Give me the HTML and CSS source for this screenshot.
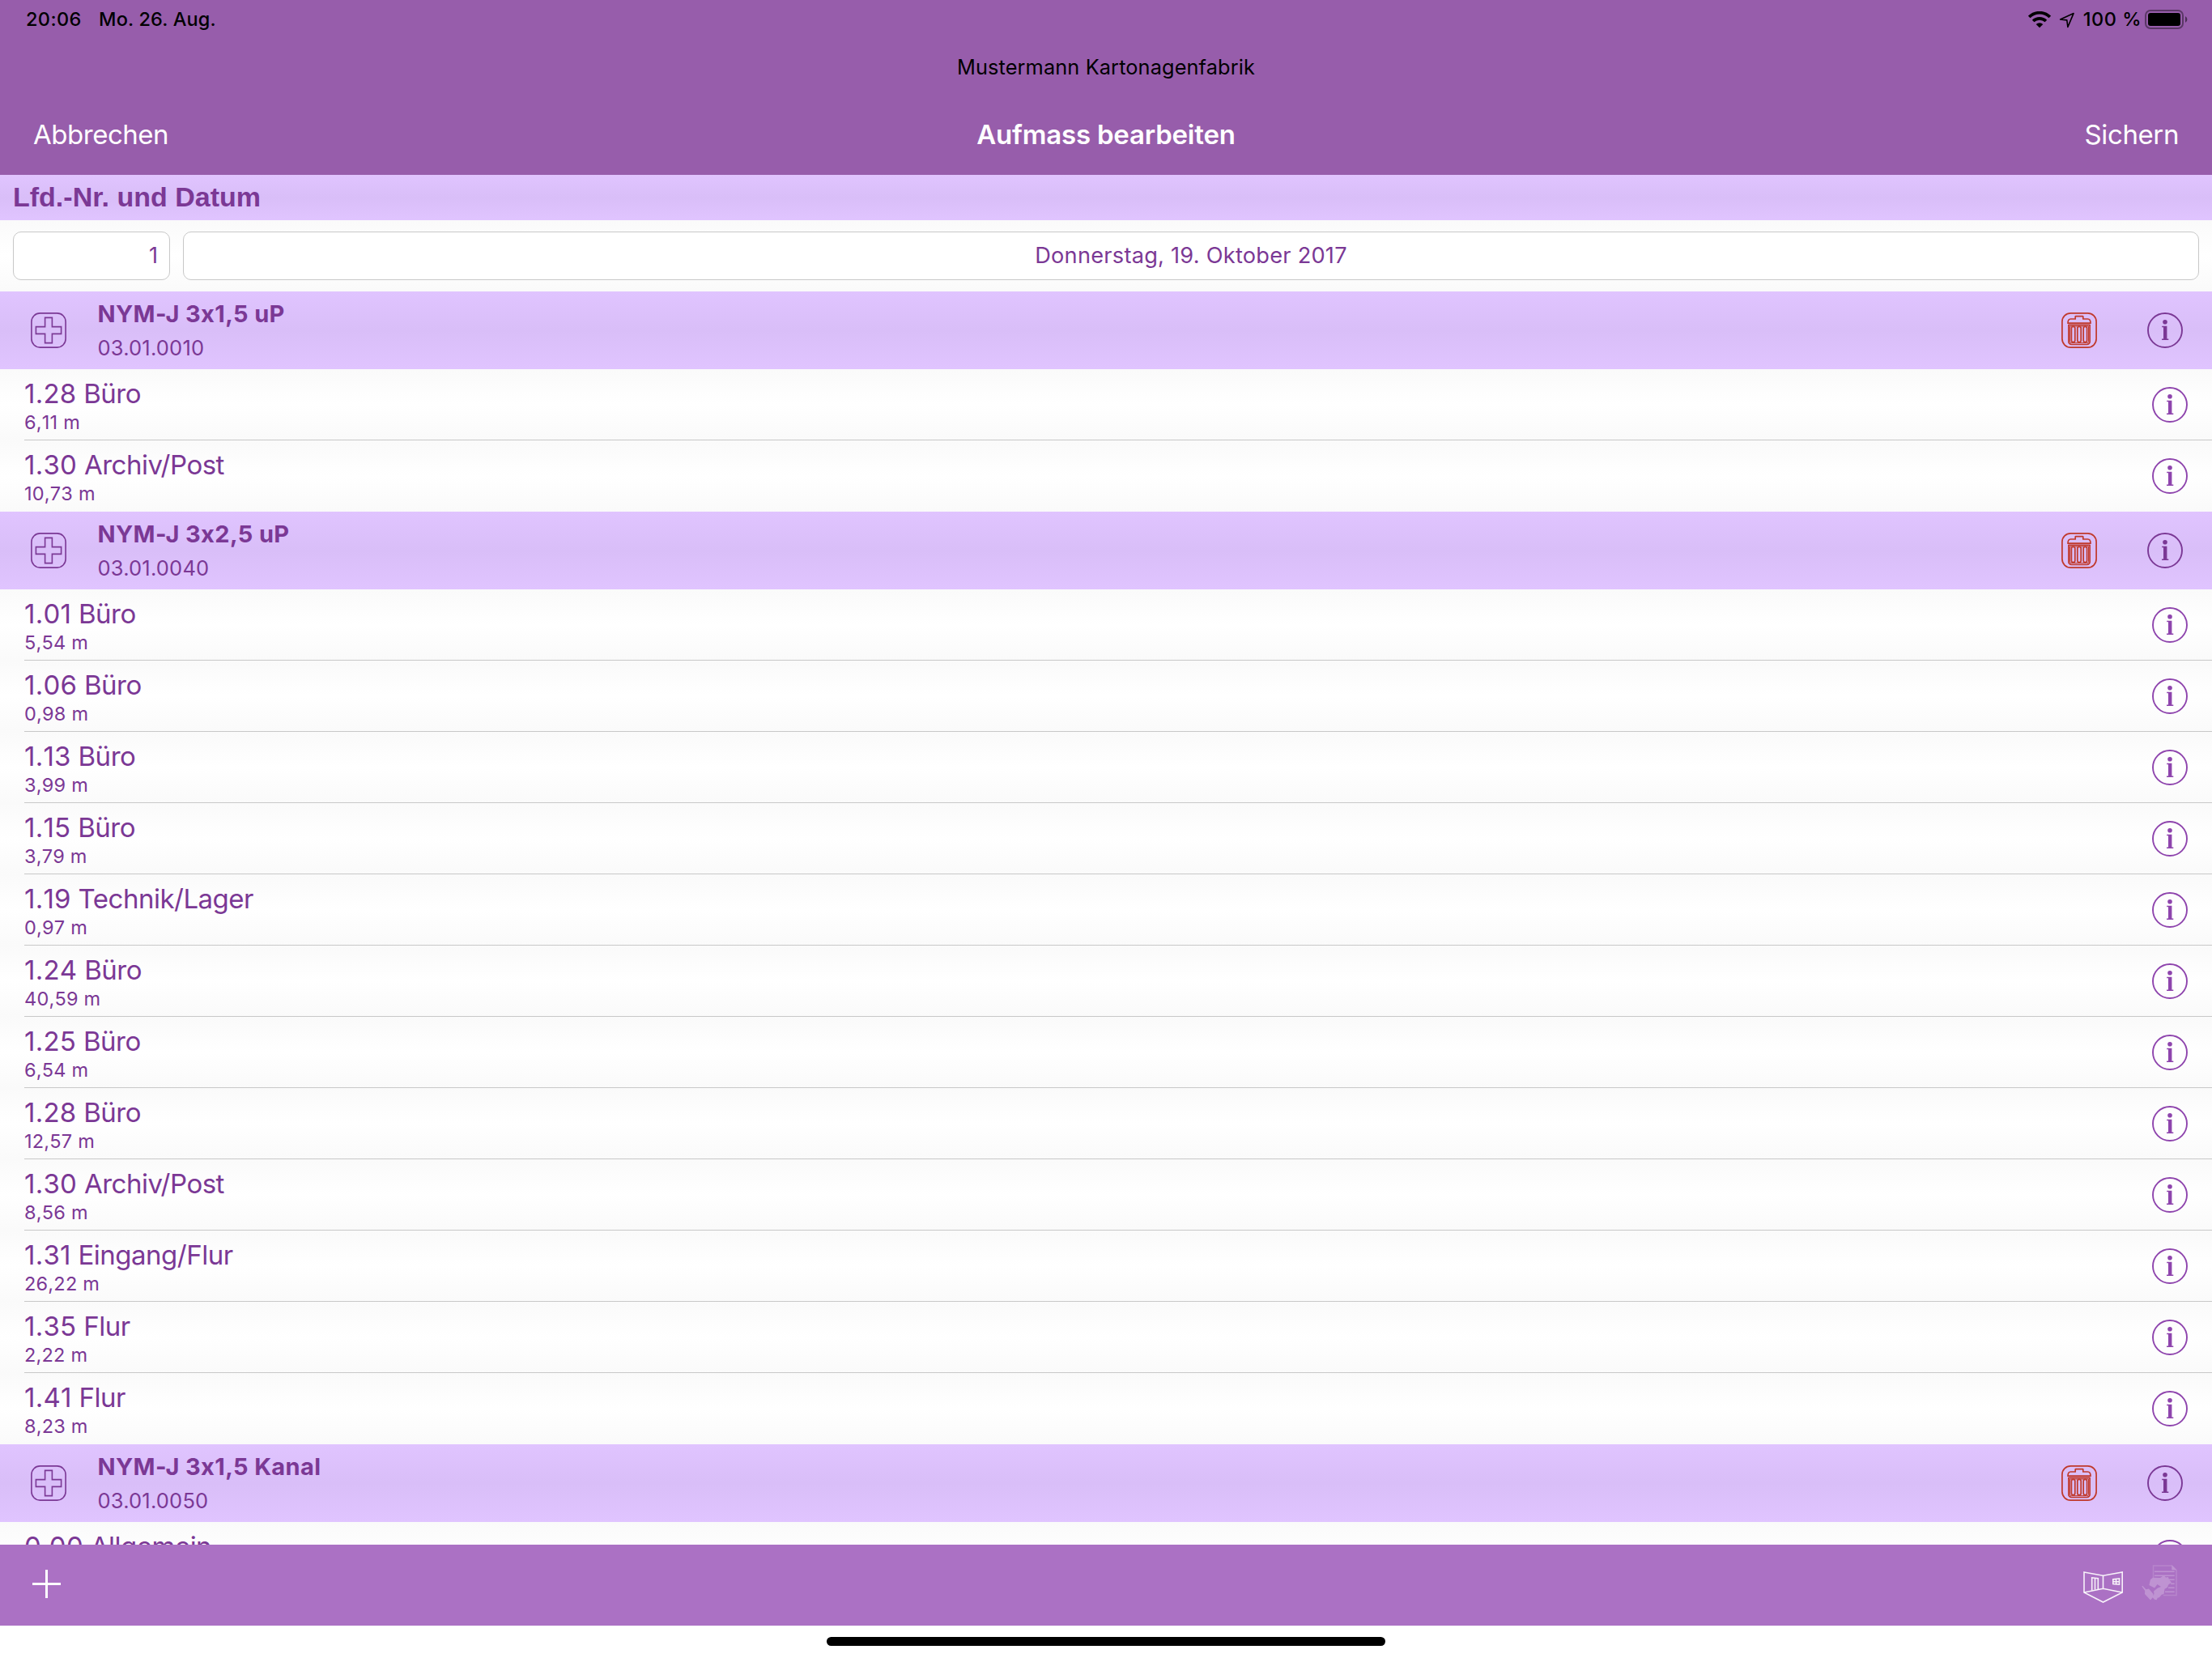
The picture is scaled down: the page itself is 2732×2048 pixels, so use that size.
FILE: index.html
```
<!DOCTYPE html>
<html lang="de">
<head>
<meta charset="utf-8">
<title>Aufmass bearbeiten</title>
<link rel="stylesheet" href="styles.css">
</head>
<body>
<svg class="defs" aria-hidden="true">
  <symbol id="info" viewBox="0 0 44 44">
    <circle cx="22" cy="22" r="21" fill="none" stroke="currentColor" stroke-width="1.9"/>
    <circle cx="22" cy="11.8" r="2.8" fill="currentColor"/>
    <path d="M18.2 16.7h6.2v15.9h1.9v1.3h-8.3v-1.3h2v-14.4h-1.8z" fill="currentColor"/>
  </symbol>
  <symbol id="plusbox" viewBox="0 0 44 44">
    <g fill="none" stroke="currentColor" stroke-width="1.6">
      <rect x=".9" y=".9" width="42.2" height="42.2" rx="10.5"/>
      <path d="M17.6 6.4h8.8v11.2h11.2v8.8H26.4v11.2h-8.8V26.4H6.4v-8.8h11.2z"/>
    </g>
  </symbol>
  <symbol id="trash" viewBox="0 0 44 44">
    <g fill="none" stroke="currentColor" stroke-width="1.7" stroke-linejoin="round">
      <rect x=".9" y=".9" width="42.2" height="42.2" rx="10.5"/>
      <path d="M8 13.2h28c0-2.7-1.2-5.2-3.400-5.200h-5.800V5.200c0-.4-.3-.6-.7-.6h-8.200c-.4 0-.7.200-.7.600V8h-5.800C9.200 8 8 10.500 8 13.200z"/>
      <path d="M8.900 15.300h26.200v20.700a3.500 3.500 0 0 1-3.500 3.500H12.400a3.500 3.500 0 0 1-3.500-3.500z"/>
      <path d="M10.500 17v18.800a1.800 1.800 0 0 0 1.800 1.800h19.400a1.800 1.800 0 0 0 1.800-1.800V17z" stroke-width="1"/>
      <rect x="12.400" y="17.300" width="4.400" height="19.300" rx="2.200"/>
      <rect x="19.800" y="17.300" width="4.400" height="19.300" rx="2.200"/>
      <rect x="27.200" y="17.300" width="4.400" height="19.300" rx="2.200"/>
    </g>
  </symbol>
</svg>

<header class="header">
  <div class="status">
    <span class="time">20:06</span>
    <span class="date">Mo. 26. Aug.</span>
    <span class="indicators">
      <svg class="wifi" width="28" height="21" viewBox="0 0 28 21">
        <g fill="none" stroke="#000" stroke-width="3.700">
          <path d="M1.200 6.900a18.300 18.300 0 0 1 25.600 0"/>
          <path d="M6.100 12a11.400 11.400 0 0 1 15.800 0"/>
        </g>
        <path d="M14 20.300l-4.300-4.200a6.200 6.200 0 0 1 8.600 0z"/>
      </svg>
      <svg class="arrow" width="20" height="20" viewBox="0 0 20 20">
        <path d="M18 1.600L1.600 9l8.200.9 1.100 8.500z" fill="none" stroke="#000" stroke-width="1.600" stroke-linejoin="round"/>
      </svg>
      <span class="percent">100 %</span>
      <svg class="battery" width="54" height="24" viewBox="0 0 54 24">
        <rect x="1" y="1" width="46" height="22" rx="6" fill="none" stroke="#000" stroke-opacity=".4" stroke-width="2"/>
        <rect x="4" y="4" width="40" height="16" rx="3"/>
        <path d="M50 8a4.500 4.500 0 0 1 0 8z" fill-opacity=".5"/>
      </svg>
    </span>
  </div>
  <div class="company">Mustermann Kartonagenfabrik</div>
  <nav class="nav">
    <span class="nav-cancel">Abbrechen</span>
    <span class="nav-title">Aufmass bearbeiten</span>
    <span class="nav-save">Sichern</span>
  </nav>
</header>

<main class="content">
  <h2 class="band">Lfd.-Nr. und Datum</h2>
  <div class="fields">
    <div class="field field-number">1</div>
    <div class="field field-date">Donnerstag, 19. Oktober 2017</div>
  </div>

  <section>
    <div class="position">
      <svg class="icon"><use href="#plusbox"/></svg>
      <div class="position-text"><div class="position-name">NYM-J 3x1,5 uP</div><div class="position-number">03.01.0010</div></div>
      <svg class="icon icon-trash"><use href="#trash"/></svg>
      <svg class="icon"><use href="#info"/></svg>
    </div>
    <div class="row"><div class="row-text"><div class="room"><span class="room-no">1.28</span> Büro</div><div class="amount">6,11 m</div></div><svg class="icon"><use href="#info"/></svg></div>
    <div class="row"><div class="row-text"><div class="room"><span class="room-no">1.30</span> Archiv/Post</div><div class="amount">10,73 m</div></div><svg class="icon"><use href="#info"/></svg></div>
  </section>

  <section>
    <div class="position">
      <svg class="icon"><use href="#plusbox"/></svg>
      <div class="position-text"><div class="position-name">NYM-J 3x2,5 uP</div><div class="position-number">03.01.0040</div></div>
      <svg class="icon icon-trash"><use href="#trash"/></svg>
      <svg class="icon"><use href="#info"/></svg>
    </div>
    <div class="row"><div class="row-text"><div class="room"><span class="room-no">1.01</span> Büro</div><div class="amount">5,54 m</div></div><svg class="icon"><use href="#info"/></svg></div>
    <div class="row"><div class="row-text"><div class="room"><span class="room-no">1.06</span> Büro</div><div class="amount">0,98 m</div></div><svg class="icon"><use href="#info"/></svg></div>
    <div class="row"><div class="row-text"><div class="room"><span class="room-no">1.13</span> Büro</div><div class="amount">3,99 m</div></div><svg class="icon"><use href="#info"/></svg></div>
    <div class="row"><div class="row-text"><div class="room"><span class="room-no">1.15</span> Büro</div><div class="amount">3,79 m</div></div><svg class="icon"><use href="#info"/></svg></div>
    <div class="row"><div class="row-text"><div class="room"><span class="room-no">1.19</span> Technik/Lager</div><div class="amount">0,97 m</div></div><svg class="icon"><use href="#info"/></svg></div>
    <div class="row"><div class="row-text"><div class="room"><span class="room-no">1.24</span> Büro</div><div class="amount">40,59 m</div></div><svg class="icon"><use href="#info"/></svg></div>
    <div class="row"><div class="row-text"><div class="room"><span class="room-no">1.25</span> Büro</div><div class="amount">6,54 m</div></div><svg class="icon"><use href="#info"/></svg></div>
    <div class="row"><div class="row-text"><div class="room"><span class="room-no">1.28</span> Büro</div><div class="amount">12,57 m</div></div><svg class="icon"><use href="#info"/></svg></div>
    <div class="row"><div class="row-text"><div class="room"><span class="room-no">1.30</span> Archiv/Post</div><div class="amount">8,56 m</div></div><svg class="icon"><use href="#info"/></svg></div>
    <div class="row"><div class="row-text"><div class="room"><span class="room-no">1.31</span> Eingang/Flur</div><div class="amount">26,22 m</div></div><svg class="icon"><use href="#info"/></svg></div>
    <div class="row"><div class="row-text"><div class="room"><span class="room-no">1.35</span> Flur</div><div class="amount">2,22 m</div></div><svg class="icon"><use href="#info"/></svg></div>
    <div class="row"><div class="row-text"><div class="room"><span class="room-no">1.41</span> Flur</div><div class="amount">8,23 m</div></div><svg class="icon"><use href="#info"/></svg></div>
  </section>

  <section>
    <div class="position">
      <svg class="icon"><use href="#plusbox"/></svg>
      <div class="position-text"><div class="position-name">NYM-J 3x1,5 Kanal</div><div class="position-number">03.01.0050</div></div>
      <svg class="icon icon-trash"><use href="#trash"/></svg>
      <svg class="icon"><use href="#info"/></svg>
    </div>
    <div class="row"><div class="row-text"><div class="room"><span class="room-no">0.00</span> Allgemein</div></div><svg class="icon"><use href="#info"/></svg></div>
  </section>
</main>

<footer class="toolbar">
  <svg class="add" width="35" height="35" viewBox="0 0 35 35"><path d="M16 0h3v16h16v3H19v16h-3V19H0v-3h16z" fill="#fff"/></svg>
  <svg class="room-icon" width="52" height="42" viewBox="0 0 52 42">
    <g fill="none" stroke="#fff" stroke-opacity=".9" stroke-width="1.600">
      <path d="M2 2l23.500 4.200L49.200 2v25L25.500 39 2 27z"/>
      <path d="M2 27l23.500-4.700L49.200 27M25.500 6.200v16.100"/>
      <path d="M11.700 24.500V8.800l7.600.8v13.500M15.500 9.200v14.300"/>
      <path d="M37.800 10.700l7.700-.9v7.400l-7.700-.6zM41.600 10.200v6.800M37.800 13.700h7.700"/>
    </g>
  </svg>
  <svg class="contract" width="46" height="50" viewBox="0 0 46 50">
    <g opacity=".24">
      <path d="M15.500 21V4h23l5.500 5.500V40.500H28" fill="none" stroke="#fff" stroke-opacity=".6" stroke-width="1.500"/>
      <path d="M38.300 3.300v5.900h5.900z" fill="#fff"/>
      <path d="M17 11.200h24.700M17 16.200h24.700M33 21.200h8.700M37 26.200h4.700M34 31.200h7.700M30 36.200h11.700" fill="none" stroke="#fff" stroke-width="1.600"/>
      <path d="M10.300 28l1.700-7 3-2.300 9 .3 4.500-3 2.500 2.500 3-.5 1 3.500 3 3-4 3.300-1 3-3.500 2-1 6.200-2.700.8-3 3.500-2 .5-1.300 2.500-2.500-.6-3-3.200 2.500-3.500-.5-3.500 5-4 4-1.500-4.500-3-3.500 4.500z" fill="#fff"/>
      <path d="M1.300 29.500l1-.8 4.200 4.500 3.500-.7 5.500 6.500-.5 4-3 3.500-7-7.500.2-4z" fill="#fff"/>
    </g>
  </svg>
</footer>
<div class="home"><div class="home-bar"></div></div>
</body>
</html>
```
FILE: styles.css
```
* { box-sizing: border-box; }

body {
  margin: 0;
  width: 2732px;
  height: 2048px;
  display: flex;
  flex-direction: column;
  overflow: hidden;
  background: #fff;
  color: #7b3895;
  font-family: Inter, "Liberation Sans", sans-serif;
  white-space: nowrap;
}

svg { display: block; flex: none; }
.defs { display: none; }

.header {
  height: 216px;
  flex: none;
  background: #975dab;
}

.status {
  display: flex;
  height: 48px;
  padding: 0 29px 0 32px;
  color: #000;
  font-size: 23.5px;
  font-weight: 500;
  line-height: 48px;
}
.time { letter-spacing: .39px; margin-right: 21.4px; }
.date { letter-spacing: .15px; }
.indicators {
  display: flex;
  align-items: center;
  margin-left: auto;
}
.wifi { margin-right: 10px; }
.arrow { margin: 2px 10px 0 0; }
.percent { letter-spacing: .5px; margin-right: 4px; }

.company {
  color: #000;
  font-size: 25.3px;
  letter-spacing: .13px;
  line-height: 70px;
  text-align: center;
}

.nav {
  display: grid;
  grid-template-columns: 1fr auto 1fr;
  padding: 0 41px;
  color: #fff;
  font-size: 33px;
  line-height: 96px;
}
.nav-cancel { letter-spacing: -.48px; }
.nav-title { font-weight: 600; letter-spacing: -.2px; }
.nav-save { letter-spacing: -.4px; text-align: right; }

.content {
  flex: 1;
  min-height: 0;
  overflow: hidden;
}

.band,
.position {
  background: linear-gradient(#e0c4ff, #d9bef8 50%, #e0c4ff);
}
.band {
  height: 56px;
  margin: 0;
  padding-left: 16px;
  font: bold 34px/55px "Liberation Sans", sans-serif;
}

.fields {
  display: flex;
  gap: 16px;
  height: 88px;
  padding: 14px 16px;
  background: linear-gradient(#fafafa, #fff 50%, #fafafa);
}
.field {
  height: 60px;
  border: 1px solid #c8c8c8;
  border-radius: 10px;
  background: #fff;
  font-size: 27.2px;
  line-height: 57px;
}
.field-number { width: 194px; padding-right: 14px; text-align: right; }
.field-date { flex: 1; text-align: center; letter-spacing: .24px; }

.position {
  display: flex;
  align-items: center;
  height: 96px;
  padding: 0 36px 0 38px;
}
.position-text { flex: 1; height: 96px; padding: 8px 0 0 38.500px; }
.position-name { font-size: 29px; font-weight: 700; line-height: 39px; letter-spacing: .36px; }
.position-number { font-size: 25.5px; line-height: 45px; letter-spacing: .2px; }

.icon { width: 44px; height: 44px; }
.icon-trash { color: #c0392b; margin-right: 62px; }

.row {
  display: flex;
  align-items: center;
  height: 88px;
  padding: 0 30px;
  background: linear-gradient(#fafafa, #fff 50%, #fafafa);
}
.row:not(:last-child) {
  background:
    linear-gradient(#c8c8c8, #c8c8c8) 30px 100% / 100% 1px no-repeat,
    linear-gradient(#fafafa, #fff 50%, #fafafa);
}
.row-text { flex: 1; height: 88px; padding-top: 10px; }
.row .icon { color: #8e44ad; }
.room { font-size: 33px; line-height: 40px; letter-spacing: -.5px; }
.room-no { font-kerning: none; letter-spacing: .25px; }
.amount { font-size: 23.5px; line-height: 31px; font-kerning: none; letter-spacing: .22px; }

.toolbar {
  display: flex;
  flex: none;
  height: 100px;
  padding: 31px 42px 0 40px;
  background: #ab71c4;
}
.room-icon { margin: 1px 0 0 auto; }
.contract { margin: -9px 0 0 20px; }

.home {
  display: flex;
  justify-content: center;
  flex: none;
  height: 40px;
  padding-top: 14px;
}
.home-bar { width: 690px; height: 11px; border-radius: 6px; background: #000; }
```
